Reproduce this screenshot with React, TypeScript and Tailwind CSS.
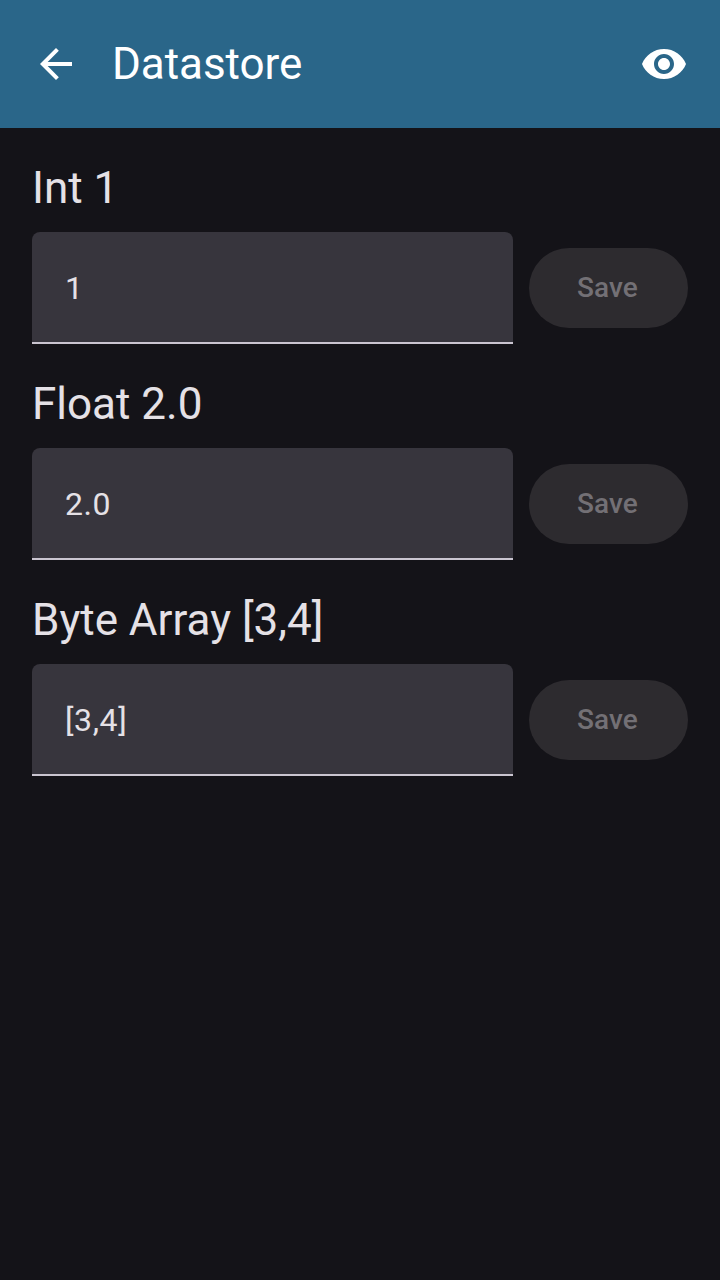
import React from "react";

type Entry = { label: string; value: string };

const entries: Entry[] = [
  { label: "Int 1", value: "1" },
  { label: "Float 2.0", value: "2.0" },
  { label: "Byte Array [3,4]", value: "[3,4]" },
];

function BackIcon() {
  return (
    <svg viewBox="0 0 24 24" className="size-12" fill="currentColor" aria-hidden="true">
      <path d="M20 11H7.83l5.59-5.59L12 4l-8 8 8 8 1.41-1.41L7.83 13H20v-2z" />
    </svg>
  );
}

function EyeIcon() {
  return (
    <svg viewBox="0 0 24 24" className="size-12" fill="currentColor" aria-hidden="true">
      <path d="M12 4.5C7 4.5 2.73 7.61 1 12c1.73 4.39 6 7.5 11 7.5s9.27-3.11 11-7.5c-1.73-4.39-6-7.5-11-7.5zM12 17c-2.76 0-5-2.24-5-5s2.24-5 5-5 5 2.24 5 5-2.24 5-5 5zm0-8c-1.66 0-3 1.34-3 3s1.34 3 3 3 3-1.34 3-3-1.34-3-3-3z" />
    </svg>
  );
}

function EntryEditor({ label, value }: Entry) {
  return (
    <section>
      <h2 className="flex h-14 items-center text-[44px] leading-[56px] text-[#e5e1e6]">{label}</h2>
      <div className="mt-4 flex items-center gap-4">
        <div className="flex h-28 w-[481px] items-center rounded-t-lg border-b-2 border-[#cac5d0] bg-[#37353d] pt-0.5 pl-[33px] text-[32px] tracking-[0.6px] text-[#e5e1e6]">
          {value}
        </div>
        <button disabled className="h-20 w-[159px] rounded-full bg-[#2d2b2f] pr-0.5 text-[28px] font-medium tracking-[0.1px] text-[#737075]">
          Save
        </button>
      </div>
    </section>
  );
}

export default function App() {
  return (
    <div className="min-h-screen bg-[#141318] font-[Roboto,sans-serif]">
      <header className="flex h-32 items-center bg-[#2a6689] px-8 text-white">
        <button aria-label="Back"><BackIcon /></button>
        <h1 className="ml-8 flex-1 text-[44px] leading-[56px] tracking-[-0.05px]">Datastore</h1>
        <button aria-label="Show"><EyeIcon /></button>
      </header>
      <main className="flex flex-col gap-8 px-8 pt-8">
        {entries.map((entry) => (
          <EntryEditor key={entry.label} {...entry} />
        ))}
      </main>
    </div>
  );
}
